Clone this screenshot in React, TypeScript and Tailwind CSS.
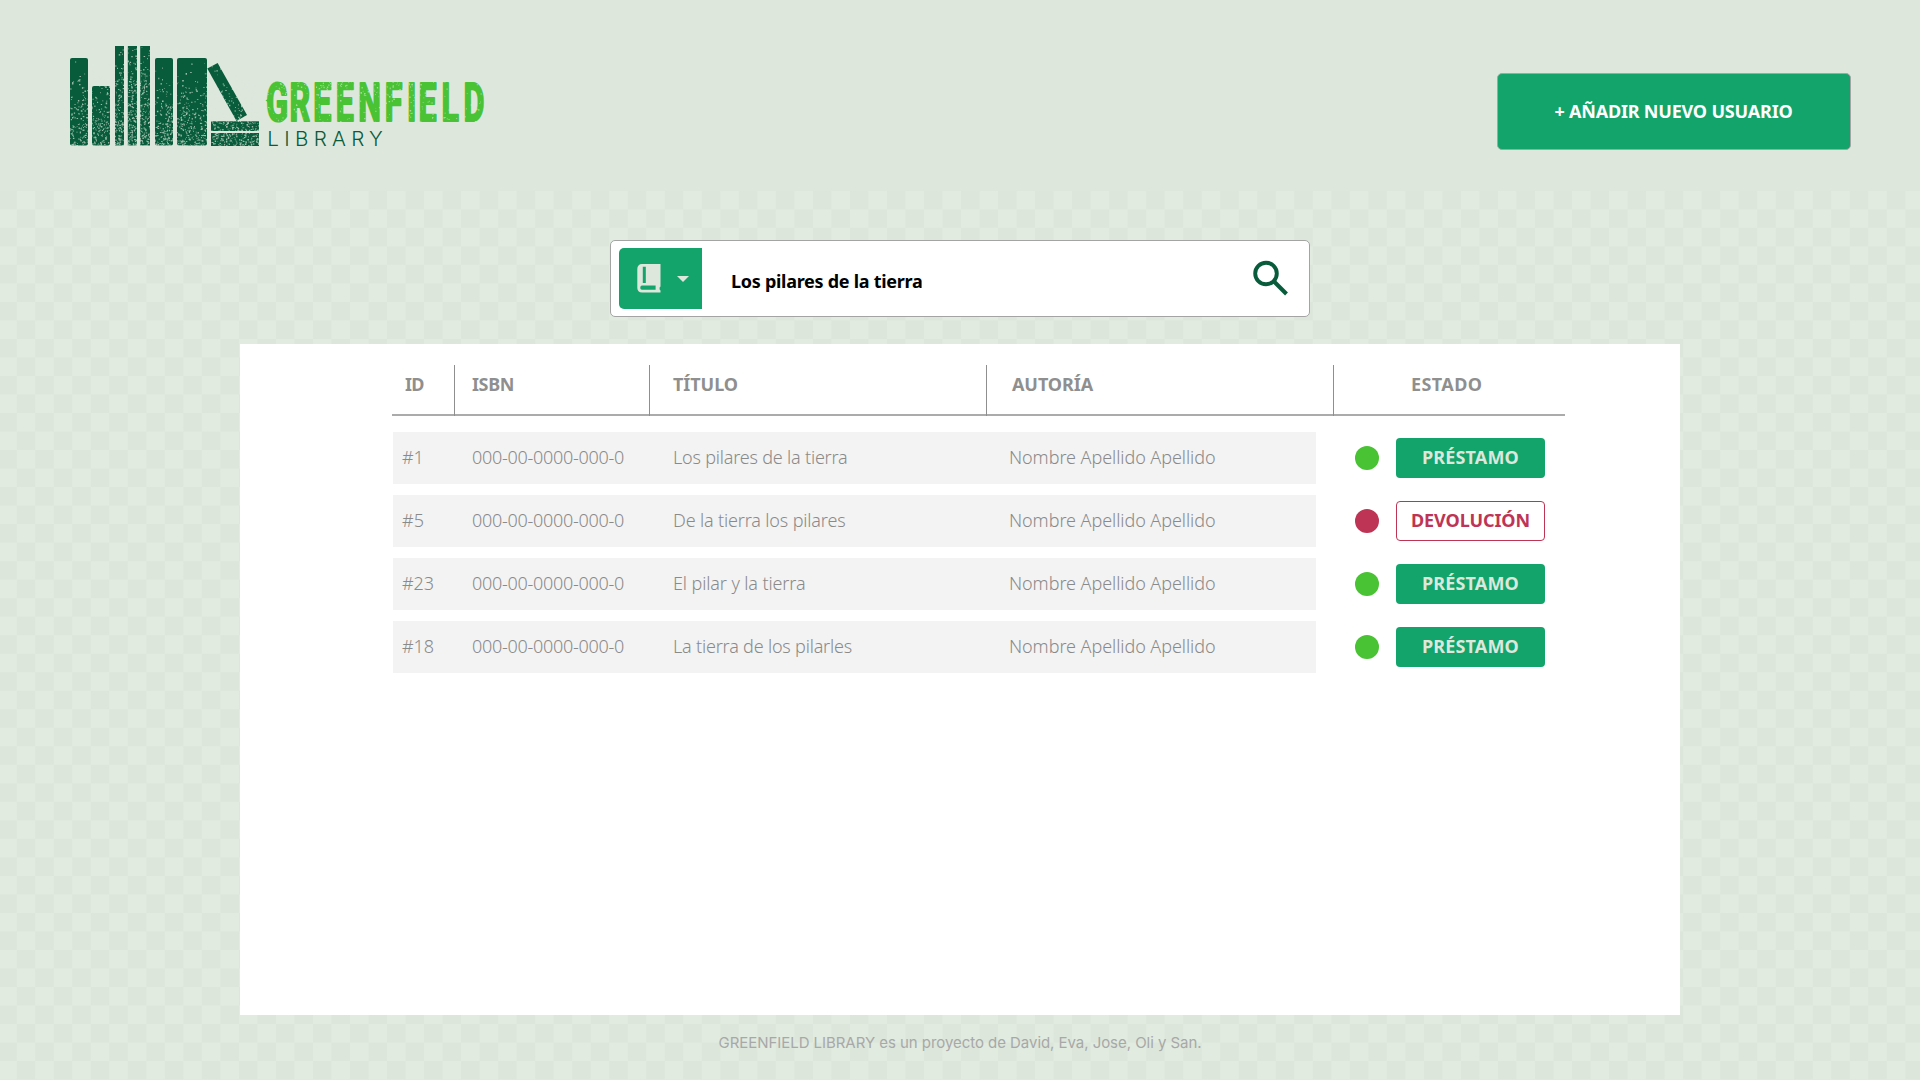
import { useLayoutEffect, useRef } from "react";
import type { ReactNode } from "react";

/** Single line of text tracked so that it takes up exactly `w` pixels. */
function Fit({ w, children, className = "" }: { w: number; children: string; className?: string }) {
  const ref = useRef<HTMLSpanElement>(null);
  useLayoutEffect(() => {
    const el = ref.current;
    if (!el) return;
    el.style.letterSpacing = "0px";
    const natural = el.getBoundingClientRect().width;
    el.style.letterSpacing = `${(w - natural) / children.length}px`;
  }, [w, children]);
  return (
    <span ref={ref} className={`inline-block whitespace-nowrap ${className}`}>
      {children}
    </span>
  );
}

function makeRandom(seed: number) {
  let s = seed;
  return () => {
    s = (s * 16807) % 2147483647;
    return s / 2147483647;
  };
}

type Area = { x: number; y: number; w: number; h: number; n: number; bias: number; seed: number };

/** Worn-print speckles; a lower bias pushes them towards the bottom. */
function speckles({ x, y, w, h, n, bias, seed }: Area) {
  const rnd = makeRandom(seed);
  let d = "";
  for (let i = 0; i < n; i++) {
    const px = x + rnd() * w;
    const py = y + Math.pow(rnd(), bias) * h;
    const a = 0.5 + rnd() * 1.1;
    const b = 0.5 + rnd() * 1.1;
    d += `M${px.toFixed(1)} ${py.toFixed(1)}h${a.toFixed(1)}v${b.toFixed(1)}h-${a.toFixed(1)}z`;
  }
  return d;
}

const bookWear = [
  speckles({ x: 0, y: 12, w: 138, h: 88, n: 1300, bias: 0.42, seed: 771 }),
  speckles({ x: 45, y: 0, w: 35, h: 100, n: 300, bias: 0.8, seed: 91 }),
  speckles({ x: 136, y: 17, w: 54, h: 60, n: 220, bias: 0.6, seed: 3031 }),
  speckles({ x: 141, y: 75, w: 48, h: 26, n: 300, bias: 0.8, seed: 517 }),
].join("");

const wordWear = [
  speckles({ x: 196, y: 35, w: 220, h: 42, n: 260, bias: 1, seed: 4242 }),
  speckles({ x: 196, y: 35, w: 150, h: 14, n: 120, bias: 1, seed: 88 }),
].join("");

function Logo() {
  return (
    <svg width="420" height="106" viewBox="0 0 420 106" className="block" aria-label="Greenfield Library">
      <g fill="#085c3b">
        <rect x="0" y="12" width="18" height="87.5" rx="2" />
        <rect x="22" y="40" width="18" height="59.5" rx="2" />
        <rect x="45" y="0" width="9" height="99.5" />
        <rect x="57.8" y="0" width="9.2" height="99.5" />
        <rect x="70.2" y="0" width="9.8" height="99.5" />
        <rect x="85" y="12" width="18" height="87.5" rx="2" />
        <rect x="107" y="12" width="30" height="87.5" rx="2" />
        <path d="M137.3 22.5 L147.6 17 L177 69 L166.5 75 Z" />
        <rect x="141" y="75.3" width="48" height="9.7" />
        <rect x="141" y="87" width="48" height="13" />
      </g>
      <path d={bookWear} fill="#dde7dc" fillOpacity="0.7" />
      <text
        transform="translate(0 74.8) scale(0.6 1)"
        x="327 366 405.5 443 480.5 524.5 561.5 581 619 656"
        y="0"
        fontFamily="Roboto"
        fontWeight="700"
        fontSize="53.5"
        fill="#49c234"
        stroke="#49c234"
        strokeWidth="2.2"
        strokeLinejoin="round"
      >
        GREENFIELD
      </text>
      <path d="M195.5 54.5 l4 -2.5 v5 z" fill="#49c234" />
      <path d={wordWear} fill="#dde7dc" fillOpacity="0.6" />
      <text x="197.3" y="99.7" fontFamily="Inter" fontWeight="300" fontSize="20.6" textLength="115.5" fill="#085c3b">
        LIBRARY
      </text>
    </svg>
  );
}

function BookIcon() {
  return (
    <svg width="24" height="29" viewBox="0 0 24 29" className="block">
      <path
        fillRule="evenodd"
        fill="#dde7dc"
        d="M5 0H23.5V22.5L22.6 23.4V25.6L23.5 26.5V28.5H5C2 28.5 .3 26.5 .3 24V5C.3 2 2 0 5 0ZM5.8 2.8V19H8.8V2.8ZM5 21.5C2.8 21.5 2.8 25.8 5 25.8H18.6V21.5Z"
      />
    </svg>
  );
}

const columns = [
  { label: "ID", cell: "w-[63px] pl-[13px] border-r", w: 18.5 },
  { label: "ISBN", cell: "w-[195px] pl-[17px] border-r", w: 42 },
  { label: "TÍTULO", cell: "w-[337px] pl-[23px] border-r", w: 65 },
  { label: "AUTORÍA", cell: "w-[347px] pl-[25px] border-r", w: 81 },
  { label: "ESTADO", cell: "flex-1 pl-[77px]", w: 71.5 },
];

const books = [
  { id: "#1", idW: 21.5, title: "Los pilares de la tierra", titleW: 174.5, loaned: false },
  { id: "#5", idW: 22, title: "De la tierra los pilares", titleW: 172.5, loaned: true },
  { id: "#23", idW: 32, title: "El pilar y la tierra", titleW: 132.5, loaned: false },
  { id: "#18", idW: 32, title: "La tierra de los pilarles", titleW: 179, loaned: false },
];

function ActionButton({ loaned }: { loaned: boolean }) {
  const base = "flex h-10 w-[149px] items-center justify-center rounded-[4px] pb-[2px] text-[18px] font-bold";
  return loaned ? (
    <button className={`${base} border border-[#be3455] bg-white text-[#be3455]`}>
      <Fit w={119}>DEVOLUCIÓN</Fit>
    </button>
  ) : (
    <button className={`${base} bg-[#12a46a] text-[#dde7dc]`}>
      <Fit w={97}>PRÉSTAMO</Fit>
    </button>
  );
}

function Cell({ className = "", children }: { className?: string; children: ReactNode }) {
  return <div className={className}>{children}</div>;
}

export default function App() {
  return (
    <div className="flex h-[1080px] w-[1920px] flex-col overflow-hidden bg-[#dde7dc] font-['Noto_Sans','Open_Sans',sans-serif]">
      <header className="flex h-[191px] shrink-0 items-start justify-between pl-[70px] pr-[69px]">
        <div className="pt-[46px]">
          <Logo />
        </div>
        <button className="mt-[73px] flex h-[77px] w-[354px] items-center justify-center rounded-[5px] border border-[#a4a4a4] bg-[#12a46a] pr-px text-[18px] font-bold text-white">
          <Fit w={238}>+ AÑADIR NUEVO USUARIO</Fit>
        </button>
      </header>

      <main className="flex flex-1 flex-col items-center bg-[repeating-conic-gradient(#e1ebe0_0_25%,#dce6db_0_50%)] bg-[length:37.04px_37.04px] bg-[position:-1.8px_-0.2px] pt-[49px]">
        <div className="flex h-[77px] w-[700px] items-center rounded-[5px] border border-[#a4a4a4] bg-white pl-[8px] pr-[21px]">
          <div className="flex h-[61px] w-[83px] items-center rounded-l-[5px] bg-[#12a46a] pl-[18px]">
            <BookIcon />
            <svg width="12" height="6" viewBox="0 0 12 6" className="ml-4 block">
              <path d="M0 0H12L6 6Z" fill="#dde7dc" />
            </svg>
          </div>
          <div className="flex-1 pl-[29px] pt-[5px] text-[18px] font-bold text-black">
            <Fit w={191.5}>Los pilares de la tierra</Fit>
          </div>
          <svg width="36" height="36" viewBox="0 0 36 36" className="mb-[2px] block" fill="none" stroke="#085c3b">
            <circle cx="14" cy="13.5" r="10.8" strokeWidth="3.9" />
            <path d="M21.5 21L34.5 34" strokeWidth="4" />
          </svg>
        </div>

        <section className="mt-[27px] h-[671px] w-[1440px] bg-white pl-[152px] pt-[21px]">
          <div className="flex h-[51px] w-[1173px] text-[18px] font-bold text-[#8f8f8f] shadow-[inset_0_-2px_0_#ababab]">
            {columns.map((c) => (
              <div key={c.label} className={`${c.cell} border-[#8f8f8f] pt-[6px] leading-[27px]`}>
                <Fit w={c.w}>{c.label}</Fit>
              </div>
            ))}
          </div>

          <div className="mt-4 flex flex-col gap-[11px] pl-px">
            {books.map((b) => (
              <div key={b.id} className="flex h-[52px] items-center">
                <div className="flex h-full w-[923px] items-center bg-[#f3f3f3] pb-[2px] text-[18px] font-light text-[#8a8a8a]">
                  <Cell className="w-[79px] pl-[9px]">
                    <Fit w={b.idW}>{b.id}</Fit>
                  </Cell>
                  <Cell className="w-[201px]">
                    <Fit w={152}>000-00-0000-000-0</Fit>
                  </Cell>
                  <Cell className="w-[336px]">
                    <Fit w={b.titleW}>{b.title}</Fit>
                  </Cell>
                  <Cell>
                    <Fit w={206.5}>Nombre Apellido Apellido</Fit>
                  </Cell>
                </div>
                <div className={`ml-[39px] mr-[17px] size-6 rounded-full ${b.loaned ? "bg-[#be3455]" : "bg-[#49c234]"}`} />
                <ActionButton loaned={b.loaned} />
              </div>
            ))}
          </div>
        </section>

        <footer className="mt-4 font-['Inter',sans-serif] text-[15px] leading-[24px] text-[#a8a8a8]">
          <Fit w={483}>GREENFIELD LIBRARY es un proyecto de David, Eva, Jose, Oli y San.</Fit>
        </footer>
      </main>
    </div>
  );
}
